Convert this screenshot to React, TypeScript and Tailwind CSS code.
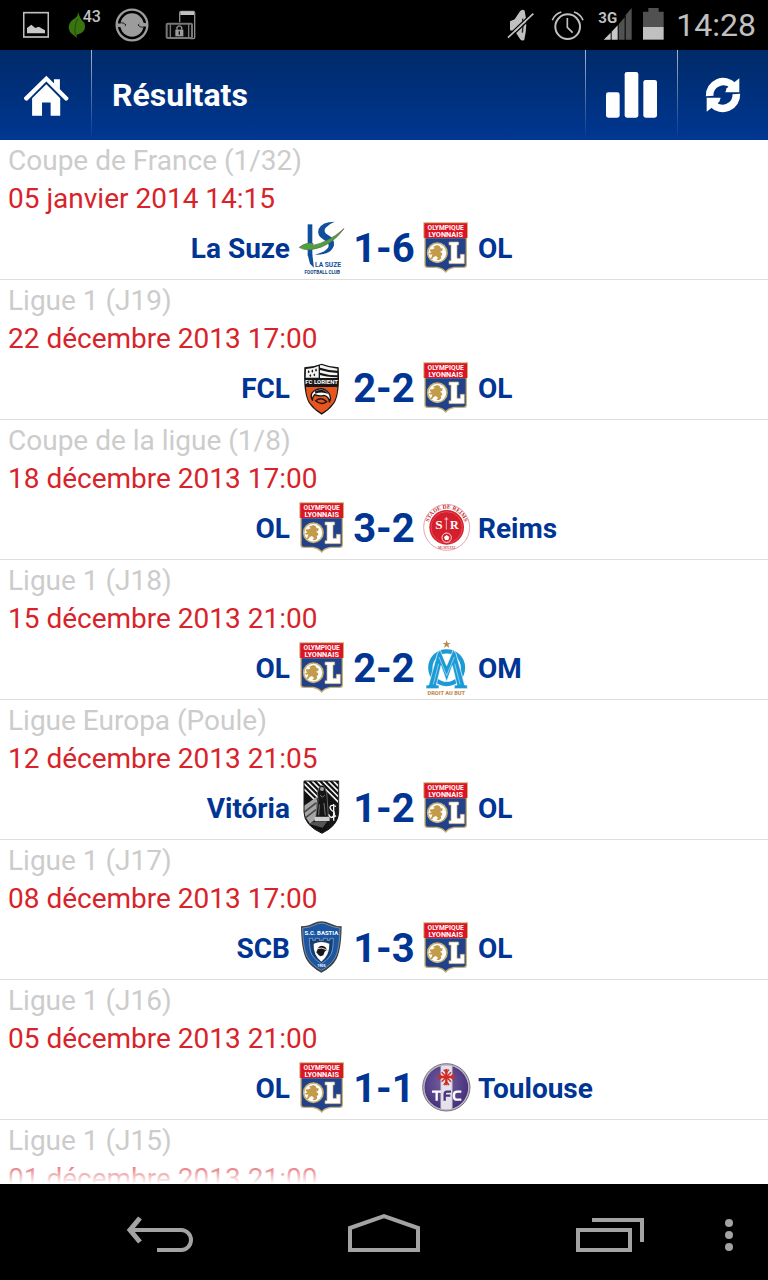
import React from "react";

const crestClass = "block h-[57px] w-12 overflow-visible";
const sans = "Roboto, sans-serif";
const serif = "'Liberation Serif', serif";

function OlCrest() {
  return (
    <svg viewBox="24 15 144 171" className={crestClass} role="img" aria-label="Olympique Lyonnais">
      <path d="M28 22H162V69H159V152Q158 159 150 159H122Q104 162 95 174Q86 162 68 159H40Q32 159 31 152V69H28Z" fill="#c9b172" />
      <path d="M35 70H155V150Q155 155 148 155H120Q103 158 95 168Q87 158 70 155H42Q35 155 35 150Z" fill="#21418b" />
      <path d="M31 25H159V69H31Z" fill="#dc1426" />
      <text x="95" y="45" textAnchor="middle" fontFamily={sans} fontWeight="700" fontSize="20" fill="#fff">OLYMPIQUE</text>
      <text x="95" y="65" textAnchor="middle" fontFamily={sans} fontWeight="700" fontSize="22" fill="#fff">LYONNAIS</text>
      <circle cx="70" cy="113" r="29" fill="#fff" stroke="#c9b172" strokeWidth="5" />
      <path d="M62 93l8-3 7 3 3 7 6 0-1 7-7 3 6 4 1 7-5 1 2 8-6 5-9 0 5-6-6-6-7 3-4 6-8-1 6-5 2-8-7 1-3-4 8-3-6-4 2-5 8 0 5-4-5-4z" fill="#c29c4a" />
      <path d="M105 81H134V90H129V130H139V118H151V146H105V137H111V90H105Z" fill="#fff" stroke="#c9b172" strokeWidth="2" />
    </svg>
  );
}

function LaSuzeCrest() {
  return (
    <svg viewBox="354 15 144 171" className={crestClass} role="img" aria-label="La Suze Football Club">
      <path d="M383 28H397V122H383Z" fill="#0f4f9c" />
      <path d="M383 119H397L402 158L390 146Z" fill="#0f4f9c" />
      <path d="M464 20Q426 20 416 42Q409 62 431 74Q450 84 445 97Q438 111 405 119Q454 121 462 91Q465 70 443 59Q428 50 437 38Q446 27 464 20Z" fill="#0f4f9c" />
      <path d="M358 97Q378 81 400 86L396 92Q445 83 492 41Q453 94 398 103Q375 107 358 97Z" fill="#48a53a" stroke="#6d6d55" strokeWidth="2.5" />
      <text x="444" y="155" textAnchor="middle" fontFamily={sans} fontWeight="700" fontSize="20" fill="#0f4f9c">LA SUZE</text>
      <text x="427" y="176" textAnchor="middle" fontFamily={sans} fontWeight="700" fontSize="14" fill="#0b3f80">FOOTBALL CLUB</text>
    </svg>
  );
}

function LorientCrest() {
  return (
    <svg viewBox="24 15 144 171" className={crestClass} role="img" aria-label="FC Lorient">
      <path d="M43 37Q72 35 95 26Q118 35 146 37Q151 115 133 145Q118 166 95 179Q72 166 57 145Q39 115 43 37Z" fill="#161616" />
      <path d="M48 42Q70 40 86 33V68H47Z" fill="#f4f4f4" />
      <path d="M90 31L95 30Q118 39 142 41V47Q115 46 90 38ZM90 45Q115 53 142 54V61Q115 61 90 53ZM90 60Q105 65 142 67V69H90Z" fill="#f4f4f4" />
      <path d="M56 45l3 6-3 4-3-4zM67 43l3 6-3 4-3-4zM78 40l3 6-3 4-3-4zM61 57l3 5-3 4-3-4zM73 55l3 5-3 4-3-4z" fill="#161616" />
      <text x="95" y="88" textAnchor="middle" fontFamily={sans} fontWeight="700" fontSize="18" fill="#fff">FC LORIENT</text>
      <path d="M48 96H142Q141 126 130 143Q116 162 95 174Q74 162 60 143Q49 126 48 96Z" fill="#e9551f" />
      <path d="M68 137Q57 119 72 108Q98 92 117 115Q125 129 118 142Q118 125 102 121Q86 125 74 119Q66 126 68 137Z" fill="#fff" stroke="#161616" strokeWidth="4" />
      <path d="M75 109Q99 96 115 117Q96 108 76 116Z" fill="#161616" />
      <path d="M77 137Q94 124 110 140Q94 152 77 137Z" fill="none" stroke="#161616" strokeWidth="4" />
    </svg>
  );
}

function ReimsCrest() {
  return (
    <svg viewBox="396 15 144 171" className={crestClass} role="img" aria-label="Stade de Reims">
      <defs>
        <path id="reims-ring" d="M414 97A56 56 0 0 1 526 97" />
      </defs>
      <circle cx="470" cy="97" r="69" fill="#fff" stroke="#e6a6aa" strokeWidth="3" />
      <circle cx="470" cy="97" r="52" fill="#d51e2b" />
      <circle cx="470" cy="97" r="47" fill="none" stroke="#ec7a80" strokeWidth="1.5" />
      <text fontFamily={serif} fontWeight="700" fontSize="17" fill="#bf1c28">
        <textPath href="#reims-ring" startOffset="50%" textAnchor="middle">STADE DE REIMS</textPath>
      </text>
      <text x="447" y="101" textAnchor="middle" fontFamily={serif} fontWeight="700" fontSize="40" fill="#fff">S</text>
      <text x="493" y="101" textAnchor="middle" fontFamily={serif} fontWeight="700" fontSize="36" fill="#fff">R</text>
      <path d="M469 66V104M463 72H475" stroke="#fff" strokeWidth="2" />
      <circle cx="470" cy="128" r="14" fill="#d51e2b" stroke="#fff" strokeWidth="2.5" />
      <path d="M470 120l8 6-3 9h-10l-3-9z" fill="#fff" />
      <text x="470" y="161" textAnchor="middle" fontFamily={serif} fontWeight="700" fontSize="10" fill="#d0545c">MCMXXXI</text>
    </svg>
  );
}

function OmCrest() {
  return (
    <svg viewBox="396 15 144 171" className={crestClass} role="img" aria-label="Olympique de Marseille">
      <path d="M470 15l3 9h9l-7 5 3 10-8-6-8 6 3-10-7-5h9z" fill="#b98b52" />
      <circle cx="470" cy="98" r="49" fill="none" stroke="#1b9ad6" strokeWidth="13" />
      <path d="M408 161V150H416L442 56L450 44L470 92L490 44L498 56L524 150H532V161H493V150H501L487 92L470 140L453 92L439 150H447V161Z" fill="#1b9ad6" stroke="#fff" strokeWidth="2" />
      <path d="M447 66L470 122L493 66M430 148L446 86M510 148L494 86" fill="none" stroke="#bfe5f5" strokeWidth="2" />
      <text x="469" y="179" textAnchor="middle" fontFamily={sans} fontWeight="900" fontSize="17" fill="#c19056">DROIT AU BUT</text>
    </svg>
  );
}

function VitoriaCrest() {
  return (
    <svg viewBox="24 15 144 171" className={crestClass} role="img" aria-label="Vitória">
      <defs>
        <clipPath id="vitoria-shield">
          <path d="M42 18H146V112Q145 151 96 175Q43 151 42 112Z" />
        </clipPath>
      </defs>
      <g clipPath="url(#vitoria-shield)">
        <path d="M42 18H146V175H42Z" fill="#111" />
        <path d="M50 18L86 54M66 18L92 44M82 18L98 34M42 26L84 68M42 42L80 80M98 18L146 66M114 18L146 50M130 18L146 34M106 42L146 82" stroke="#f2f2f2" strokeWidth="5" />
        <path d="M42 92L80 66V130L60 146L42 120Z" fill="#a4a4a4" />
        <path d="M42 112L78 84M44 130L78 104" stroke="#4a4a4a" strokeWidth="5" />
        <path d="M113 84L146 92V175H108Z" fill="#161616" />
        <path d="M82 52L88 36Q96 26 104 36L110 52L112 76L115 126H77L84 76Z" fill="#151515" stroke="#8d8d8d" strokeWidth="2" />
        <circle cx="96" cy="42" r="6" fill="#a5a5a5" />
        <path d="M90 60L97 67L104 60M88 88L86 121M102 84L106 121" fill="none" stroke="#777" strokeWidth="3" />
        <path d="M74 126H119V138H74Z" fill="#d0d0d0" />
        <path d="M56 146L78 139H112L98 158Z" fill="#555" />
        <path d="M138 94Q122 87 120 97Q122 107 132 110Q137 122 122 129M131 87V137M116 118Q121 134 138 122" fill="none" stroke="#f4f4f4" strokeWidth="4" />
      </g>
      <path d="M42 18H146V112Q145 151 96 175Q43 151 42 112Z" fill="none" stroke="#1b1b1b" strokeWidth="3" />
    </svg>
  );
}

function BastiaCrest() {
  return (
    <svg viewBox="24 15 144 171" className={crestClass} role="img" aria-label="S.C. Bastia">
      <path d="M33 34Q55 34 70 25Q94 13 119 25Q136 34 155 34Q154 103 140 131Q127 156 94 173Q62 156 48 131Q34 103 33 34Z" fill="#3c4046" />
      <path d="M38 39Q59 38 74 30Q94 19 115 30Q133 38 150 39Q149 101 136 127Q122 151 94 166Q66 151 52 127Q39 101 38 39Z" fill="#1a56a2" stroke="#c3cbd4" strokeWidth="1.5" />
      <path d="M58 70H68V76H76V70H88V76H100V70H112V76H120V70H130Q130 104 122 120Q112 136 94 146Q76 136 66 120Q58 104 58 70Z" fill="#173e72" stroke="#9db9da" strokeWidth="2" />
      <text x="94" y="59" textAnchor="middle" fontFamily={sans} fontWeight="700" fontSize="18" fill="#fff">S.C. BASTIA</text>
      <path d="M71 86Q94 76 118 86Q119 120 94 140Q69 120 71 86Z" fill="#fff" />
      <path d="M82 106Q83 94 95 92Q109 93 110 105L104 110L100 121Q88 127 84 118L79 112Z" fill="#17171b" />
      <path d="M82 101Q95 96 109 104L114 109" fill="none" stroke="#dadada" strokeWidth="3" />
      <text x="94" y="157" textAnchor="middle" fontFamily={sans} fontWeight="700" fontSize="11" fill="#fff">1905</text>
    </svg>
  );
}

function ToulouseCrest() {
  return (
    <svg viewBox="396 15 144 171" className={crestClass} role="img" aria-label="Toulouse FC">
      <defs>
        <clipPath id="tfc-disc">
          <circle cx="469" cy="97" r="66" />
        </clipPath>
        <radialGradient id="tfc-violet" cx="0.45" cy="0.4" r="0.6">
          <stop offset="0" stopColor="#7560a2" />
          <stop offset="1" stopColor="#46307a" />
        </radialGradient>
      </defs>
      <circle cx="469" cy="97" r="71" fill="#b9b6c0" stroke="#777283" strokeWidth="3" />
      <g clipPath="url(#tfc-disc)">
        <circle cx="469" cy="97" r="66" fill="url(#tfc-violet)" />
        <path d="M452 25H487V170H452Z" fill="#e4e2ea" />
        <path d="M452 25V170M487 25V170" stroke="#9c92ae" strokeWidth="2" />
      </g>
      <path d="M469 42V91M445 66H493" stroke="#d12b26" strokeWidth="7" />
      <path d="M455 52L483 80M483 52L455 80" stroke="#d12b26" strokeWidth="4" />
      <path d="M461 44L469 53L477 44M461 90L469 80L477 90M447 58L456 66L447 74M491 58L482 66L491 74" fill="none" stroke="#d12b26" strokeWidth="4" />
      <path d="M426 110H453M440 110V137" stroke="#fff" strokeWidth="7" />
      <path d="M514 110H502Q492 110 492 119V125Q492 134 502 134H514" fill="none" stroke="#fff" strokeWidth="7" />
      <path d="M483 110H471Q464 110 464 117V137M464 122H481" fill="none" stroke="#4a347a" strokeWidth="7" />
    </svg>
  );
}

type Club = { name: string; crest: () => React.ReactElement };
type Match = { competition: string; date: string; home: Club; away: Club; score: string };

const ol: Club = { name: "OL", crest: OlCrest };

const matches: Match[] = [
  { competition: "Coupe de France (1/32)", date: "05 janvier 2014 14:15", home: { name: "La Suze", crest: LaSuzeCrest }, away: ol, score: "1-6" },
  { competition: "Ligue 1 (J19)", date: "22 décembre 2013 17:00", home: { name: "FCL", crest: LorientCrest }, away: ol, score: "2-2" },
  { competition: "Coupe de la ligue (1/8)", date: "18 décembre 2013 17:00", home: ol, away: { name: "Reims", crest: ReimsCrest }, score: "3-2" },
  { competition: "Ligue 1 (J18)", date: "15 décembre 2013 21:00", home: ol, away: { name: "OM", crest: OmCrest }, score: "2-2" },
  { competition: "Ligue Europa (Poule)", date: "12 décembre 2013 21:05", home: { name: "Vitória", crest: VitoriaCrest }, away: ol, score: "1-2" },
  { competition: "Ligue 1 (J17)", date: "08 décembre 2013 17:00", home: { name: "SCB", crest: BastiaCrest }, away: ol, score: "1-3" },
  { competition: "Ligue 1 (J16)", date: "05 décembre 2013 21:00", home: ol, away: { name: "Toulouse", crest: ToulouseCrest }, score: "1-1" },
];

function MatchHeading({ competition, date }: { competition: string; date: string }) {
  return (
    <div className="px-2 pt-[2px] text-[28px] leading-[38px]">
      <p className="text-[#cccccc]">{competition}</p>
      <p className="text-[#d8232a]">{date}</p>
    </div>
  );
}

function MatchRow({ match }: { match: Match }) {
  const HomeCrest = match.home.crest;
  const AwayCrest = match.away.crest;
  return (
    <li className="border-b border-[#dddddd]">
      <MatchHeading competition={match.competition} date={match.date} />
      <div className="grid h-[61px] grid-cols-[1fr_48px_76px_48px_1fr] items-center text-[28px] font-bold text-[#003594]">
        <span className="pr-2 text-right">{match.home.name}</span>
        <HomeCrest />
        <span className="text-center text-[40px] leading-none">{match.score}</span>
        <AwayCrest />
        <span className="pl-2">{match.away.name}</span>
      </div>
    </li>
  );
}

function StatusBar() {
  return (
    <div className="flex h-[50px] shrink-0 items-center justify-between bg-black pl-[23px] pr-3 text-[#c0c0c0]">
      <div className="flex items-center gap-4">
        <svg viewBox="69 0 78 150" className="h-[50px] w-[26px]" aria-hidden="true">
          <rect x="71" y="38" width="74" height="73" fill="none" stroke="#bebebe" strokeWidth="5" />
          <path d="M81 100V84L94 74L106 84L116 80L135 91V100Z" fill="#c8c8c8" />
        </svg>
        <svg viewBox="195 0 102 150" className="h-[50px] w-[34px] overflow-visible" aria-hidden="true">
          <path d="M235 36Q239 57 253 68Q260 89 244 99L229 105L231 114L223 107Q205 96 206 81Q207 65 225 55Q234 48 235 36Z" fill="#39750f" />
          <path d="M233 57Q220 82 227 106" fill="none" stroke="#244b0b" strokeWidth="3" />
          <text x="248" y="66" fontFamily={sans} fontWeight="500" fontSize="48" fill="#c0c0c0">43</text>
        </svg>
        <svg viewBox="345 0 102 150" className="h-[50px] w-[34px]" aria-hidden="true">
          <circle cx="396" cy="75" r="46" fill="none" stroke="#9c9c9c" strokeWidth="7" />
          <circle cx="396" cy="75" r="35" fill="#9c9c9c" />
          <path d="M360 69Q371 66 378 75Q373 80 362 78M432 81Q421 84 414 75Q419 70 430 72" fill="none" stroke="#111" strokeWidth="3" />
          <path d="M350 70L368 71L376 76L370 83L353 80ZM442 80L424 79L416 74L422 67L439 70Z" fill="#9c9c9c" />
        </svg>
        <svg viewBox="495 0 93 150" className="h-[50px] w-[31px]" aria-hidden="true">
          <path d="M539 67V38Q539 34 543 34H580Q584 34 584 38V112Q584 116 580 116H570" fill="none" stroke="#8d8d8d" strokeWidth="4" />
          <path d="M541 34H582V45H541Z" fill="#c1c1c1" />
          <rect x="500" y="71" width="76" height="43" rx="3" fill="#090909" stroke="#777" strokeWidth="6" />
          <path d="M511 73V112M566 73V112" stroke="#777" strokeWidth="4" />
          <rect x="526" y="89" width="24" height="20" fill="#9b9b9b" />
          <path d="M531 89V82Q538 73 545 82V89" fill="none" stroke="#9b9b9b" strokeWidth="4" />
          <path d="M538 94V104" stroke="#111" strokeWidth="4" />
        </svg>
      </div>
      <div className="flex items-center gap-3">
        <svg viewBox="46 0 96 150" className="h-[50px] w-8" aria-hidden="true">
          <path d="M61 64L75 58L91 34Q98 26 105 32Q115 75 104 119Q96 126 89 114L76 94L61 91Z" fill="#c0c0c0" />
          <path d="M99 56Q102 75 98 98" fill="none" stroke="#222" strokeWidth="4" />
          <path d="M52 110L128 38M58 117L134 45" stroke="#000" strokeWidth="4" />
          <path d="M55 113L131 41" stroke="#c0c0c0" strokeWidth="5" />
        </svg>
        <svg viewBox="179 0 108 150" className="h-[50px] w-9" aria-hidden="true">
          <circle cx="235" cy="80" r="37" fill="none" stroke="#c0c0c0" strokeWidth="6" />
          <path d="M234 54V82L250 98M189 61Q196 42 216 36M281 61Q274 42 254 36" fill="none" stroke="#c0c0c0" strokeWidth="5" />
        </svg>
        <svg viewBox="322 0 102 150" className="h-[50px] w-[34px] overflow-visible" aria-hidden="true">
          <text x="326" y="68" fontFamily={sans} fontWeight="700" fontSize="45" fill="#c0c0c0">3G</text>
          <path d="M342 119L363 98V119ZM366 95L384 76V119H366Z" fill="#c8c8c8" />
          <path d="M387 73L405 52V119H387ZM408 45L426 24V119H408Z" fill="#515151" />
        </svg>
        <svg viewBox="460 0 63 150" className="h-[50px] w-[21px]" aria-hidden="true">
          <path d="M460 35H476V24H507V35H522V82H460Z" fill="#515151" />
          <path d="M460 81H522V119H460Z" fill="#c0c0c0" />
        </svg>
        <time className="text-[32px] leading-[50px]">14:28</time>
      </div>
    </div>
  );
}

function Divider() {
  return <span className="h-full w-px shrink-0 bg-linear-to-b from-[#aab4cc] to-transparent" />;
}

function RefreshArrow() {
  return (
    <>
      <path d="M660 290A41 41 0 0 1 731 260" fill="none" stroke="#fff" strokeWidth="23" />
      <path d="M749 237V279H707L711 267Z" fill="#fff" />
    </>
  );
}

function Header() {
  return (
    <header className="flex h-[90px] shrink-0 items-center bg-linear-to-b from-[#002a69] to-[#003792] text-white">
      <button type="button" aria-label="Accueil" className="flex h-full w-[91px] shrink-0 items-center justify-center">
        <svg viewBox="69 224 138 124" className="h-[41px] w-[46px]" fill="#fff">
          <path d="M139 226L206 293Q206 302 197 302L139 244L81 302Q72 302 71 293Z" />
          <path d="M162 242V237H180V268L162 250Z" />
          <path d="M139 252L181 294V347H152V307H126V347H96V294Z" />
        </svg>
      </button>
      <Divider />
      <h1 className="flex-1 pl-5 text-[32px] font-bold">Résultats</h1>
      <Divider />
      <button type="button" aria-label="Classement" className="flex h-full w-[91px] shrink-0 items-center justify-center">
        <svg viewBox="348 218 153 138" className="h-[46px] w-[51px]" fill="#fff">
          <rect x="348" y="279" width="41" height="76" rx="7" />
          <rect x="404" y="218" width="41" height="137" rx="7" />
          <rect x="460" y="242" width="41" height="113" rx="7" />
        </svg>
      </button>
      <Divider />
      <button type="button" aria-label="Actualiser" className="flex h-full w-[90px] shrink-0 items-center justify-center">
        <svg viewBox="646 233 108 108" className="h-9 w-9">
          <RefreshArrow />
          <g transform="rotate(180 700 287)">
            <RefreshArrow />
          </g>
        </svg>
      </button>
    </header>
  );
}

function NavBar() {
  const key = "flex h-full w-[162px] items-center justify-center";
  return (
    <nav aria-label="Navigation" className="flex h-24 shrink-0 items-center bg-black pl-[78px]">
      <div className="flex h-full flex-1 justify-between">
        <button type="button" aria-label="Retour" className={key}>
          <svg viewBox="125 1184 68 96" className="h-24 w-[68px]" fill="none" stroke="#a3a3a3" strokeWidth="4">
            <path d="M130 1230H181A10 10 0 0 1 181 1250H157" />
            <path d="M140 1218L130 1230L140 1242" strokeWidth="5" />
          </svg>
        </button>
        <button type="button" aria-label="Écran d’accueil" className={key}>
          <svg viewBox="347 1184 74 96" className="h-24 w-[74px]" fill="none" stroke="#a3a3a3" strokeWidth="4">
            <path d="M350 1250V1228L384 1216L418 1228V1250Z" />
          </svg>
        </button>
        <button type="button" aria-label="Applications récentes" className={key}>
          <svg viewBox="574 1184 70 96" className="h-24 w-[70px]" fill="none" stroke="#a3a3a3" strokeWidth="4">
            <path d="M578 1230H630V1250H578ZM592 1220H642V1242" />
          </svg>
        </button>
      </div>
      <button type="button" aria-label="Menu" className="flex h-full w-[78px] items-center justify-center">
        <svg viewBox="724 1184 10 96" className="h-24 w-[10px]" fill="#a3a3a3">
          <circle cx="729" cy="1223" r="4" />
          <circle cx="729" cy="1235" r="4" />
          <circle cx="729" cy="1247" r="4" />
        </svg>
      </button>
    </nav>
  );
}

export default function App() {
  return (
    <div className="flex h-screen flex-col bg-white font-[Roboto,sans-serif]">
      <StatusBar />
      <Header />
      <main className="relative min-h-0 flex-1">
        <ul className="h-full overflow-y-auto [scrollbar-width:none]">
          {matches.map((match) => (
            <MatchRow key={match.date} match={match} />
          ))}
          <li>
            <MatchHeading competition="Ligue 1 (J15)" date="01 décembre 2013 21:00" />
          </li>
        </ul>
        <div className="pointer-events-none absolute inset-x-0 bottom-0 h-7 bg-linear-to-b from-transparent to-white" />
      </main>
      <NavBar />
    </div>
  );
}
